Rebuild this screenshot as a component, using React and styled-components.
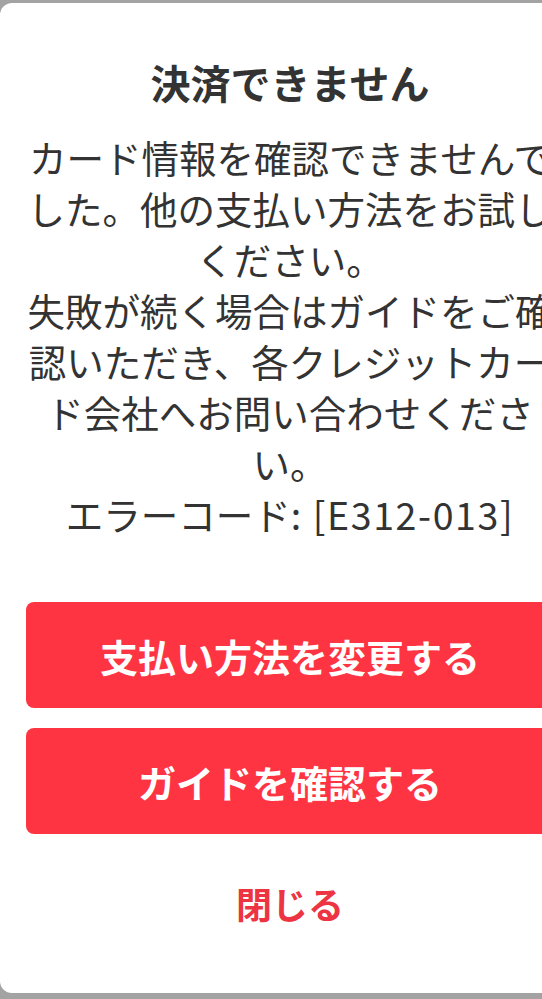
import React from 'react';
import styled, { createGlobalStyle } from 'styled-components';

const GlobalStyle = createGlobalStyle`
  html, body {
    margin: 0;
    padding: 0;
    background-color: #a3a3a3;
    overflow: hidden;
  }
  body {
    font-family: "Noto Sans CJK JP", "Noto Sans", sans-serif;
  }
`;

const Backdrop = styled.div`
  width: 542px;
  height: 999px;
  padding-top: 3px;
  box-sizing: border-box;
  overflow: hidden;
`;

const Dialog = styled.div`
  width: 580px;
  height: 990px;
  box-sizing: border-box;
  background-color: #fff;
  border-radius: 12px;
  padding: 51px 26px 0;
  display: flex;
  flex-direction: column;
`;

const Title = styled.h1`
  margin: 0 0 21px;
  font-size: 40px;
  line-height: 56px;
  font-weight: 700;
  color: #333;
  text-align: center;
`;

const Message = styled.p`
  margin: 0;
  font-size: 37.5px;
  line-height: 51px;
  color: #333;
  text-align: center;
`;

const Code = styled.span`
  letter-spacing: 1.6px;
`;

const Actions = styled.div`
  margin-top: 63px;
  display: flex;
  flex-direction: column;
  gap: 20px;
`;

const PrimaryButton = styled.button`
  height: 106px;
  border: none;
  border-radius: 8px;
  background-color: #ff3443;
  color: #fff;
  font-family: inherit;
  font-size: 38px;
  font-weight: 700;
  cursor: pointer;
`;

const CloseButton = styled.button`
  margin-top: 34px;
  height: 70px;
  border: none;
  background: none;
  color: #ec3442;
  font-family: inherit;
  font-size: 36px;
  font-weight: 700;
  cursor: pointer;
`;

export const App = () => {
  return (
    <>
      <GlobalStyle />
      <Backdrop>
        <Dialog>
          <Title>決済できません</Title>
          <Message>
            カード情報を確認できませんでした。他の支払い方法をお試しください。
            <br />
            失敗が続く場合はガイドをご確認いただき、各クレジットカード会社へお問い合わせください。
            <br />
            エラーコード<Code>: [E312-013]</Code>
          </Message>
          <Actions>
            <PrimaryButton>支払い方法を変更する</PrimaryButton>
            <PrimaryButton>ガイドを確認する</PrimaryButton>
          </Actions>
          <CloseButton>閉じる</CloseButton>
        </Dialog>
      </Backdrop>
    </>
  );
};

export default App;
